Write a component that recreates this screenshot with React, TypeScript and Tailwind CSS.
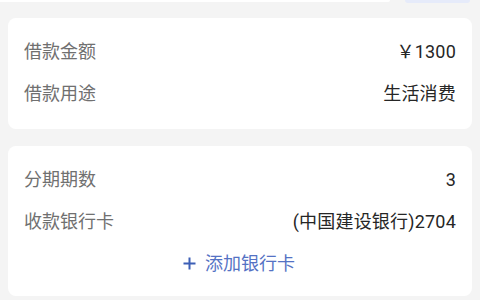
import React from 'react';

const font = { fontFamily: 'Roboto, "Noto Sans CJK SC", sans-serif' };

interface RowProps {
  label: string;
  value: string;
}

const Row: React.FC<RowProps> = ({ label, value }) => (
  <div className="flex h-[42px] items-center justify-between">
    <span className="text-[18px] text-[#707070]">{label}</span>
    <span className="text-[18px] tracking-[0.2px] text-[#262626]">{value}</span>
  </div>
);

export default function App() {
  return (
    <div className="flex h-[300px] w-[480px] flex-col overflow-hidden bg-[#f4f4f4]" style={font}>
      {/* bottom edge of the search bar and button above */}
      <div className="flex h-[3px] items-start gap-[15px] pr-[10px]">
        <div className="h-[2px] flex-1 rounded-br-[4px] bg-white" />
        <div className="h-[3px] w-[65px] rounded-b-[4px] bg-[#e6ebfa]" />
      </div>

      <div className="mx-[8px] mt-[15px] rounded-[8px] bg-white pb-[15px] pl-[16px] pr-[16px] pt-[12px]">
        <Row label="借款金额" value="￥1300" />
        <Row label="借款用途" value="生活消费" />
      </div>

      <div className="mx-[8px] mt-[17px] rounded-[8px] bg-white pb-[12px] pl-[16px] pr-[16px] pt-[12px]">
        <Row label="分期期数" value="3" />
        <Row label="收款银行卡" value="(中国建设银行)2704" />
        <div className="flex h-[42px] items-center justify-center gap-[9px] pr-[2px]">
          <svg width="13" height="13" viewBox="0 0 13 13" fill="none">
            <path d="M6.5 0.5V12.5M0.5 6.5H12.5" stroke="#3d5fb6" strokeWidth="2" />
          </svg>
          <span className="text-[18px] text-[#5472c4]">添加银行卡</span>
        </div>
      </div>
    </div>
  );
}
